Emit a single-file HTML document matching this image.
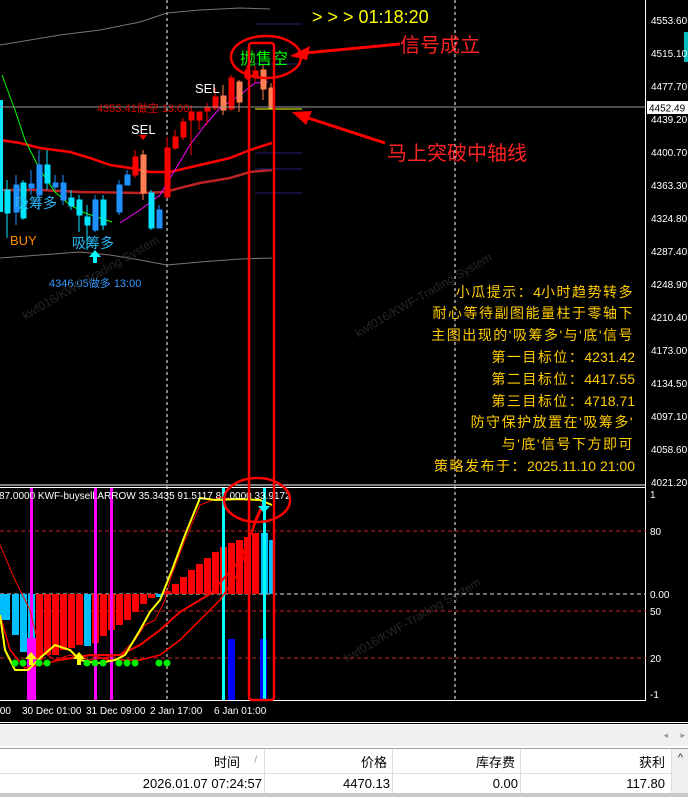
<!DOCTYPE html>
<html><head><meta charset="utf-8"><style>
html,body{margin:0;padding:0;background:#000;width:688px;height:797px;overflow:hidden;font-family:"Liberation Sans","Noto Sans CJK SC",sans-serif}
svg{position:absolute;left:0;top:0}
.tb{position:absolute;left:0;top:724px;width:688px;height:73px;background:#f0f0f0}
</style></head><body>
<svg width="688" height="724" viewBox="0 0 688 724" font-family="Liberation Sans, Noto Sans CJK SC, sans-serif">
<rect width="688" height="724" fill="#000"/>
<line x1="167" y1="0" x2="167" y2="701" stroke="#fff" stroke-dasharray="3,3"/>
<line x1="455" y1="0" x2="455" y2="701" stroke="#fff" stroke-dasharray="3,3"/>
<polyline fill="none" stroke="#777" stroke-width="1" points="0,45 30,40 60,35 100,30 140,22 167,13 200,10 240,8 270,9"/>
<polyline fill="none" stroke="#777" stroke-width="1" points="0,258 40,255 80,252 110,255 140,260 167,265 200,262 240,259 272,258"/>
<polyline fill="none" stroke="#f00" stroke-width="2.5" points="0,140 20,143 40,148 70,152 90,158 110,165 130,168 150,172 170,172 200,165 230,158 250,150 272,143"/>
<polyline fill="none" stroke="#b22" stroke-width="2.5" points="0,190 40,190 80,192 140,193 165,192 180,188 200,183 230,178 250,172 272,170"/>
<polyline fill="none" stroke="#0f0" stroke-width="1" points="2,75 15,110 25,140 40,170 55,192 70,205 85,213 100,218 112,222"/>
<polyline fill="none" stroke="#f0f" stroke-width="1" points="120,223 140,210 160,195 175,170 190,145 205,125 220,108 240,95 255,83 268,82"/>
<g stroke-width="1">
<rect x="0" y="100" width="3" height="112" fill="#00e5ff"/>
<g fill="#00e5ff" stroke="#00e5ff"><line x1="7" y1="180" x2="7" y2="238"/><rect x="5" y="190" width="5" height="23"/>
<line x1="23" y1="180" x2="23" y2="220"/><rect x="21" y="183" width="5" height="35"/>
<line x1="47" y1="150" x2="47" y2="190"/><rect x="45" y="165" width="5" height="18"/>
<line x1="71" y1="190" x2="71" y2="210"/><rect x="69" y="198" width="5" height="8"/>
<line x1="79" y1="195" x2="79" y2="232"/><rect x="77" y="200" width="5" height="15"/>
<line x1="87" y1="205" x2="87" y2="250"/><rect x="85" y="217" width="5" height="8"/>
<line x1="103" y1="195" x2="103" y2="230"/><rect x="101" y="200" width="5" height="25"/>
<line x1="151" y1="190" x2="151" y2="230"/><rect x="149" y="193" width="5" height="35"/></g>
<g fill="#1e90ff" stroke="#1e90ff"><line x1="16" y1="175" x2="16" y2="225"/><rect x="14" y="185" width="5" height="27"/>
<line x1="31" y1="170" x2="31" y2="195"/><rect x="29" y="184" width="5" height="4"/>
<line x1="39" y1="150" x2="39" y2="210"/><rect x="37" y="165" width="5" height="30"/>
<line x1="55" y1="175" x2="55" y2="190"/><rect x="53" y="183" width="5" height="4"/>
<line x1="63" y1="175" x2="63" y2="205"/><rect x="61" y="183" width="5" height="17"/>
<line x1="95" y1="195" x2="95" y2="232"/><rect x="93" y="200" width="5" height="30"/>
<line x1="119" y1="180" x2="119" y2="215"/><rect x="117" y="185" width="5" height="27"/>
<line x1="127" y1="170" x2="127" y2="185"/><rect x="125" y="175" width="5" height="10"/>
<line x1="159" y1="205" x2="159" y2="228"/><rect x="157" y="210" width="5" height="18"/></g>
<g fill="#f00" stroke="#f00"><line x1="135" y1="150" x2="135" y2="178"/><rect x="133" y="157" width="5" height="18"/>
<line x1="167" y1="137" x2="167" y2="198"/><rect x="165" y="148" width="5" height="49"/>
<line x1="175" y1="130" x2="175" y2="150"/><rect x="173" y="137" width="5" height="11"/>
<line x1="183" y1="118" x2="183" y2="140"/><rect x="181" y="122" width="5" height="15"/>
<line x1="191" y1="105" x2="191" y2="155"/><rect x="189" y="112" width="5" height="8"/>
<line x1="199" y1="113" x2="199" y2="130"/><rect x="197" y="112" width="5" height="8"/>
<line x1="207" y1="103" x2="207" y2="125"/><rect x="205" y="107" width="5" height="4"/>
<line x1="215" y1="88" x2="215" y2="110"/><rect x="213" y="97" width="5" height="11"/>
<line x1="231" y1="75" x2="231" y2="111"/><rect x="229" y="78" width="5" height="31"/>
<line x1="247" y1="65" x2="247" y2="80"/><rect x="245" y="70" width="5" height="8"/>
<line x1="255" y1="66" x2="255" y2="82"/><rect x="253" y="71" width="5" height="6"/></g>
<g fill="#ff7f50" stroke="#ff7f50"><line x1="143" y1="150" x2="143" y2="200"/><rect x="141" y="155" width="5" height="38"/>
<line x1="223" y1="85" x2="223" y2="115"/><rect x="221" y="96" width="5" height="14"/>
<line x1="239" y1="80" x2="239" y2="112"/><rect x="237" y="82" width="5" height="20"/>
<line x1="263" y1="65" x2="263" y2="100"/><rect x="261" y="70" width="5" height="19"/>
<line x1="271" y1="83" x2="271" y2="108"/><rect x="269" y="88" width="5" height="20"/></g>
</g>
<g stroke="#22227a"><line x1="255" y1="24" x2="302" y2="24"/><line x1="255" y1="64" x2="302" y2="64"/><line x1="255" y1="153" x2="302" y2="153"/><line x1="255" y1="169" x2="302" y2="169"/><line x1="255" y1="193" x2="302" y2="193"/></g>
<line x1="0" y1="107" x2="646" y2="107" stroke="#999"/>
<line x1="255" y1="109" x2="302" y2="109" stroke="#ff0"/>
<rect x="647" y="101" width="41" height="13" fill="#fff"/>
<text x="649" y="111.5" font-size="10" fill="#000">4452.49</text>
<line x1="645.5" y1="0" x2="645.5" y2="701" stroke="#fff"/>
<line x1="0" y1="485" x2="646" y2="485" stroke="#fff"/>
<line x1="0" y1="487.5" x2="646" y2="487.5" stroke="#fff"/>
<line x1="0" y1="700.5" x2="646" y2="700.5" stroke="#fff"/>
<rect x="684" y="32" width="4" height="30" fill="#0bb"/>
<g font-size="10" fill="#fff">
<text x="651" y="24">4553.60</text><text x="651" y="57">4515.10</text><text x="651" y="90">4477.70</text>
<text x="651" y="123">4439.20</text><text x="651" y="156">4400.70</text><text x="651" y="189">4363.30</text>
<text x="651" y="222">4324.80</text><text x="651" y="255">4287.40</text><text x="651" y="288">4248.90</text>
<text x="651" y="321">4210.40</text><text x="651" y="354">4173.00</text><text x="651" y="387">4134.50</text>
<text x="651" y="420">4097.10</text><text x="651" y="453">4058.60</text><text x="651" y="486">4021.20</text>
<text x="650" y="498">1</text><text x="650" y="535">80</text><text x="650" y="598">0.00</text>
<text x="650" y="615">50</text><text x="650" y="662">20</text><text x="650" y="698">-1</text>
<text x="-3" y="714">:00</text><text x="22" y="714">30 Dec 01:00</text><text x="86" y="714">31 Dec 09:00</text>
<text x="150" y="714">2 Jan 17:00</text><text x="214" y="714">6 Jan 01:00</text>
</g>
<line x1="0" y1="722.5" x2="688" y2="722.5" stroke="#fff"/>
<text x="312" y="23" font-size="18" fill="#ff0">&gt; &gt; &gt;  01:18:20</text>
<text x="240" y="64" font-size="16" fill="#0f0">抛售空</text>
<text x="195" y="93" font-size="13" fill="#fff">SEL</text>
<text x="131" y="134" font-size="13" fill="#fff">SEL</text>
<path d="M139,135 L147,135 L143,140Z" fill="#f00"/>
<text x="97" y="112" font-size="11" fill="#d00">4353.41做空 13:00</text>
<text x="15" y="208" font-size="14" fill="#29b6f6">吸筹多</text>
<text x="10" y="245" font-size="13" fill="#ff8c00">BUY</text>
<text x="72" y="248" font-size="14" fill="#29b6f6">吸筹多</text>
<path d="M95,250 L89,257 L93,257 L93,263 L97,263 L97,257 L101,257Z" fill="#0ff"/>
<text x="49" y="287" font-size="11" fill="#3399ff">4346.05做多 13:00</text>
<g font-size="12" fill="#262626" transform="rotate(-30 60 300)"><text x="20" y="300">kwf016/KWF-Trading System</text></g>
<g font-size="12" fill="#262626" transform="rotate(-30 400 290)"><text x="340" y="310">kwf016/KWF-Trading System</text></g>
<g font-size="12" fill="#262626" transform="rotate(-30 380 620)"><text x="330" y="640">kwf016/KWF-Trading System</text></g>
<g font-size="14" fill="#ffcc00" text-anchor="end" letter-spacing="1.5">
<text x="634" y="297">小瓜提示：<tspan letter-spacing="0">4</tspan>小时趋势转多</text>
<text x="634" y="318">耐心等待副图能量柱于零轴下</text>
<text x="634" y="340">主图出现的'吸筹多'与'底'信号</text>
<text x="635" y="362">第一目标位：<tspan letter-spacing="0">4231.42</tspan></text>
<text x="635" y="384">第二目标位：<tspan letter-spacing="0">4417.55</tspan></text>
<text x="635" y="406">第三目标位：<tspan letter-spacing="0">4718.71</tspan></text>
<text x="634" y="427">防守保护放置在'吸筹多'</text>
<text x="634" y="449">与'底'信号下方即可</text>
<text x="635" y="471">策略发布于：<tspan letter-spacing="0">2025.11.10 21:00</tspan></text>
</g>
<text x="400" y="52" font-size="20" fill="#f22">信号成立</text>
<text x="387" y="160" font-size="20" fill="#f22">马上突破中轴线</text>
<g stroke-dasharray="4,3" stroke-width="1">
<line x1="0" y1="531" x2="646" y2="531" stroke="#c22"/>
<line x1="0" y1="594" x2="646" y2="594" stroke="#ddd"/>
<line x1="0" y1="611" x2="646" y2="611" stroke="#c22"/>
<line x1="0" y1="658" x2="646" y2="658" stroke="#c22"/>
</g>
<g fill="#00bfff">
<rect x="0" y="594" width="10" height="26"/><rect x="12" y="594" width="7" height="41"/><rect x="20" y="594" width="7" height="58"/><rect x="28" y="594" width="7" height="60"/>
<rect x="84" y="594" width="7" height="52"/><rect x="156" y="594" width="7" height="3"/>
<rect x="261" y="533" width="7" height="61"/><rect x="269" y="540" width="5" height="54"/>
</g>
<g fill="#f00">
<rect x="36" y="594" width="7" height="66"/><rect x="44" y="594" width="7" height="61"/><rect x="52" y="594" width="7" height="61"/><rect x="60" y="594" width="7" height="56"/><rect x="68" y="594" width="7" height="54"/><rect x="76" y="594" width="7" height="51"/>
<rect x="92" y="594" width="7" height="49"/><rect x="100" y="594" width="7" height="42"/><rect x="108" y="594" width="7" height="36"/><rect x="116" y="594" width="7" height="31"/><rect x="124" y="594" width="7" height="26"/><rect x="132" y="594" width="7" height="18"/><rect x="140" y="594" width="7" height="10"/><rect x="148" y="594" width="7" height="4"/>
<rect x="164" y="591" width="7" height="3"/><rect x="172" y="584" width="7" height="10"/><rect x="180" y="577" width="7" height="17"/><rect x="188" y="570" width="7" height="24"/><rect x="196" y="564" width="7" height="30"/><rect x="204" y="558" width="7" height="36"/><rect x="212" y="552" width="7" height="42"/><rect x="220" y="547" width="7" height="47"/><rect x="228" y="543" width="7" height="51"/><rect x="236" y="540" width="7" height="54"/><rect x="244" y="537" width="7" height="57"/><rect x="252" y="533" width="7" height="61"/>
</g>
<rect x="27" y="638" width="9" height="62" fill="#f0f"/>
<rect x="30" y="488" width="3" height="212" fill="#f0f"/>
<rect x="94" y="488" width="3" height="212" fill="#f0f"/>
<rect x="110" y="488" width="3" height="212" fill="#f0f"/>
<rect x="222" y="488" width="3" height="212" fill="#0ff"/>
<rect x="228" y="639" width="7" height="61" fill="#00f"/>
<rect x="260" y="639" width="7" height="61" fill="#00f"/>
<rect x="263" y="488" width="3" height="212" fill="#0ff"/>
<polyline fill="none" stroke="#f00" stroke-width="1" points="0,545 15,580 30,610 40,650 55,660 70,655 90,660 120,655 135,640 145,625 155,620 165,600 170,580 185,540 200,505 220,497 240,500 262,500"/>
<polyline fill="none" stroke="#f00" stroke-width="1.5" points="0,615 10,650 25,668 60,660 90,655 110,660 140,660 160,655 180,640 200,620 220,600 240,570 255,520 262,505"/>
<polyline fill="none" stroke="#f00" stroke-width="2" points="60,660 90,655 120,655 140,645 160,630 180,612 210,594 240,560 265,500"/>
<polyline fill="none" stroke="#ff0" stroke-width="2" points="0,615 5,650 15,670 28,670 40,658 55,645 70,650 80,660 90,662 100,663 115,660 125,655 140,630 150,612 160,600 172,570 185,535 200,498 215,500 240,499 260,500 272,505"/>
<g fill="#0e0"><circle cx="15" cy="663" r="3.5"/><circle cx="23" cy="663" r="3.5"/><circle cx="39" cy="663" r="3.5"/><circle cx="47" cy="663" r="3.5"/>
<circle cx="87" cy="663" r="3.5"/><circle cx="95" cy="663" r="3.5"/><circle cx="103" cy="663" r="3.5"/><circle cx="119" cy="663" r="3.5"/><circle cx="127" cy="663" r="3.5"/><circle cx="135" cy="663" r="3.5"/><circle cx="159" cy="663" r="3.5"/><circle cx="167" cy="663" r="3.5"/></g>
<path d="M31,652 L25,659 L29,659 L29,665 L33,665 L33,659 L37,659Z" fill="#ff0"/>
<path d="M79,652 L73,659 L77,659 L77,665 L81,665 L81,659 L85,659Z" fill="#ff0"/>
<path d="M264,513 L258,506 L262,506 L262,500 L266,500 L266,506 L270,506Z" fill="#0ff"/>
<text x="-1" y="499" font-size="10" fill="#fff">87.0000  KWF-buysell.ARROW 35.3435 91.5117 87.0000 33.9172</text>
<g fill="none" stroke="#f00" stroke-width="2.5">
<rect x="249" y="43" width="25" height="657" rx="3"/>
<ellipse cx="266" cy="57" rx="35" ry="21"/>
<ellipse cx="257" cy="500" rx="33" ry="22"/>
</g>
<path d="M400,44 L305,53" stroke="#f00" stroke-width="3"/>
<path d="M290,56 L310,46 L307,60Z" fill="#f00"/>
<path d="M385,143 L305,117" stroke="#f00" stroke-width="3"/>
<path d="M292,112 L312,111 L306,125Z" fill="#f00"/>
</svg>
<div class="tb">
<div style="position:absolute;left:0;top:0;width:688px;height:1px;background:#fff"></div>
<div style="position:absolute;left:0;top:22px;width:688px;height:2px;background:#fff"></div>
<div style="position:absolute;right:20px;top:6px;font-size:9px;color:#999">◂</div>
<div style="position:absolute;right:3px;top:6px;font-size:9px;color:#999">▸</div>
<div style="position:absolute;left:0;top:24px;width:688px;height:1px;background:#a0a0a0"></div>
<div style="position:absolute;left:0;top:25px;width:672px;height:48px;background:#fff"></div>
<div style="position:absolute;left:0;top:49px;width:672px;height:1px;background:#ddd"></div>
<div style="position:absolute;left:264px;top:25px;width:1px;height:45px;background:#ddd"></div>
<div style="position:absolute;left:392px;top:25px;width:1px;height:45px;background:#ddd"></div>
<div style="position:absolute;left:520px;top:25px;width:1px;height:45px;background:#ddd"></div>
<div style="position:absolute;left:671px;top:25px;width:1px;height:45px;background:#ddd"></div>
<div style="position:absolute;left:0;top:69px;width:688px;height:4px;background:#c8c8c8"></div>
<div style="position:absolute;left:0;top:28px;font-size:13px;color:#000;width:688px;height:20px">
<span style="position:absolute;right:448px">时间</span><span style="position:absolute;right:431px;color:#999;font-size:10px;top:3px">/</span>
<span style="position:absolute;right:301px">价格</span>
<span style="position:absolute;right:173px">库存费</span>
<span style="position:absolute;right:23px">获利</span>
<span style="position:absolute;right:5px;font-size:11px;color:#333">^</span>
</div>
<div style="position:absolute;left:0;top:52px;font-size:13px;color:#000;width:688px;height:18px">
<span style="position:absolute;right:426px">2026.01.07 07:24:57</span>
<span style="position:absolute;right:298px">4470.13</span>
<span style="position:absolute;right:170px">0.00</span>
<span style="position:absolute;right:23px">117.80</span>
</div>
</div>
</body></html>
